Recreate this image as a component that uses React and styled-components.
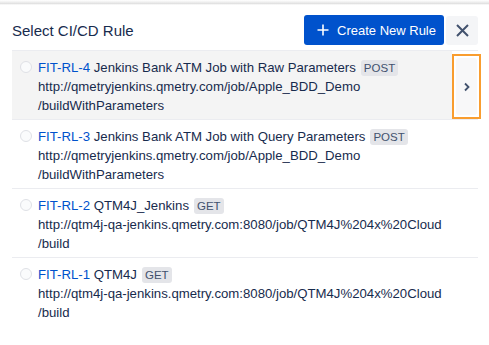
import React from "react";
import styled, { createGlobalStyle } from "styled-components";

const GlobalStyle = createGlobalStyle`
  body {
    margin: 0;
    background: #ffffff;
    font-family: "Liberation Sans", Arial, sans-serif;
    color: #172b4d;
  }
`;

const Panel = styled.div`
  width: 489px;
  height: 345px;
  overflow: hidden;
  background: #fff;
`;

const TopShade = styled.div`
  height: 5px;
  background: linear-gradient(#ffffff 0px, #f0f0f0 2px, #e2e2e2 3.5px, #ffffff 5px);
`;

const Header = styled.div`
  display: flex;
  align-items: center;
  padding: 10px 11px 0 12px;
  height: 30px;
`;

const Title = styled.div`
  flex: 1;
  font-size: 15px;
  color: #172b4d;
`;

const CreateButton = styled.button`
  display: flex;
  align-items: center;
  gap: 8px;
  height: 30px;
  width: 140px;
  padding: 0 0 0 13px;
  border: none;
  border-radius: 3px;
  background: #0052cc;
  color: #fff;
  font-family: inherit;
  font-size: 13px;
  white-space: nowrap;
  cursor: pointer;
`;

const CloseButton = styled.button`
  display: flex;
  align-items: center;
  justify-content: center;
  width: 32px;
  height: 29px;
  margin-left: 2px;
  border: none;
  border-radius: 3px;
  background: #f4f5f7;
  cursor: pointer;
`;

const List = styled.div`
  margin: 5px 11px 0 12px;
`;

const Row = styled.div`
  display: flex;
  height: 69px;
  box-sizing: border-box;
  border-top: 1px solid #ebecf0;
`;

const RowBody = styled.div`
  flex: 1;
  display: flex;
  align-items: flex-start;
  gap: 6px;
  padding: 7px 0 0 8px;
  background: ${(p) => (p.$active ? "#f4f4f4" : "transparent")};
`;

const Radio = styled.span`
  flex: none;
  width: 10px;
  height: 10px;
  margin-top: 3px;
  border: 1.5px solid #dfe1e6;
  border-radius: 50%;
  background: #fafbfc;
`;

const Text = styled.div`
  font-size: 13.2px;
  line-height: 19px;
  color: #172b4d;
  width: 406px;
`;

const Key = styled.span`
  color: #0052cc;
`;

const Method = styled.span`
  display: inline-block;
  margin-left: 5px;
  padding: 0 3px;
  line-height: 16px;
  border-radius: 3px;
  background: #e4e5e9;
  color: #42526e;
  font-size: 11.5px;
`;

const Nowrap = styled.span`
  white-space: nowrap;
`;

const ChevronCell = styled.div`
  flex: none;
  width: ${(p) => (p.$highlight ? "29px" : "26px")};
  margin: ${(p) => (p.$highlight ? "3px -3px 0 0" : "0")};
  box-sizing: border-box;
  border: 2.5px solid ${(p) => (p.$highlight ? "#f99d2f" : "transparent")};
  display: flex;
  padding: 2px;
  background: ${(p) => (p.$highlight ? "#fff" : "transparent")};
`;

const ChevronButton = styled.div`
  flex: 1;
  display: flex;
  align-items: center;
  justify-content: center;
  border-radius: 3px;
  background: #f8f8f9;
`;

const rules = [
  {
    key: "FIT-RL-4",
    name: "Jenkins Bank ATM Job with Raw Parameters",
    method: "POST",
    url: "http://qmetryjenkins.qmetry.com/job/Apple_BDD_Demo",
    tail: "/buildWithParameters",
    active: true,
  },
  {
    key: "FIT-RL-3",
    name: "Jenkins Bank ATM Job with Query Parameters",
    method: "POST",
    url: "http://qmetryjenkins.qmetry.com/job/Apple_BDD_Demo",
    tail: "/buildWithParameters",
  },
  {
    key: "FIT-RL-2",
    name: "QTM4J_Jenkins",
    method: "GET",
    url: "http://qtm4j-qa-jenkins.qmetry.com:8080/job/QTM4J%204x%20Cloud",
    tail: "/build",
  },
  {
    key: "FIT-RL-1",
    name: "QTM4J",
    method: "GET",
    url: "http://qtm4j-qa-jenkins.qmetry.com:8080/job/QTM4J%204x%20Cloud",
    tail: "/build",
  },
];

function RuleRow({ rule }) {
  return (
    <Row>
      <RowBody $active={rule.active}>
        <Radio />
        <Text>
          <Key>{rule.key}</Key> {rule.name}
          <Method>{rule.method}</Method>
          <br />
          <Nowrap>{rule.url}</Nowrap>
          <wbr />
          <Nowrap>{rule.tail}</Nowrap>
        </Text>
      </RowBody>
      <ChevronCell $highlight={rule.active}>
        {rule.active && (
          <ChevronButton>
            <svg width="8" height="10" viewBox="0 0 8 10">
              <path d="M2 1.5 L5.5 5 L2 8.5" fill="none" stroke="#42526e" strokeWidth="1.8" />
            </svg>
          </ChevronButton>
        )}
      </ChevronCell>
    </Row>
  );
}

export default function App() {
  return (
    <>
      <GlobalStyle />
      <Panel>
        <TopShade />
        <Header>
          <Title>Select CI/CD Rule</Title>
          <CreateButton>
            <svg width="12" height="12" viewBox="0 0 12 12">
              <path d="M6 0.5 V11.5 M0.5 6 H11.5" stroke="#fff" strokeWidth="1.6" />
            </svg>
            Create New Rule
          </CreateButton>
          <CloseButton>
            <svg width="13" height="13" viewBox="0 0 13 13">
              <path d="M1 1 L12 12 M12 1 L1 12" stroke="#42526e" strokeWidth="2" />
            </svg>
          </CloseButton>
        </Header>
        <List>
          {rules.map((r) => (
            <RuleRow key={r.key} rule={r} />
          ))}
        </List>
      </Panel>
    </>
  );
}
